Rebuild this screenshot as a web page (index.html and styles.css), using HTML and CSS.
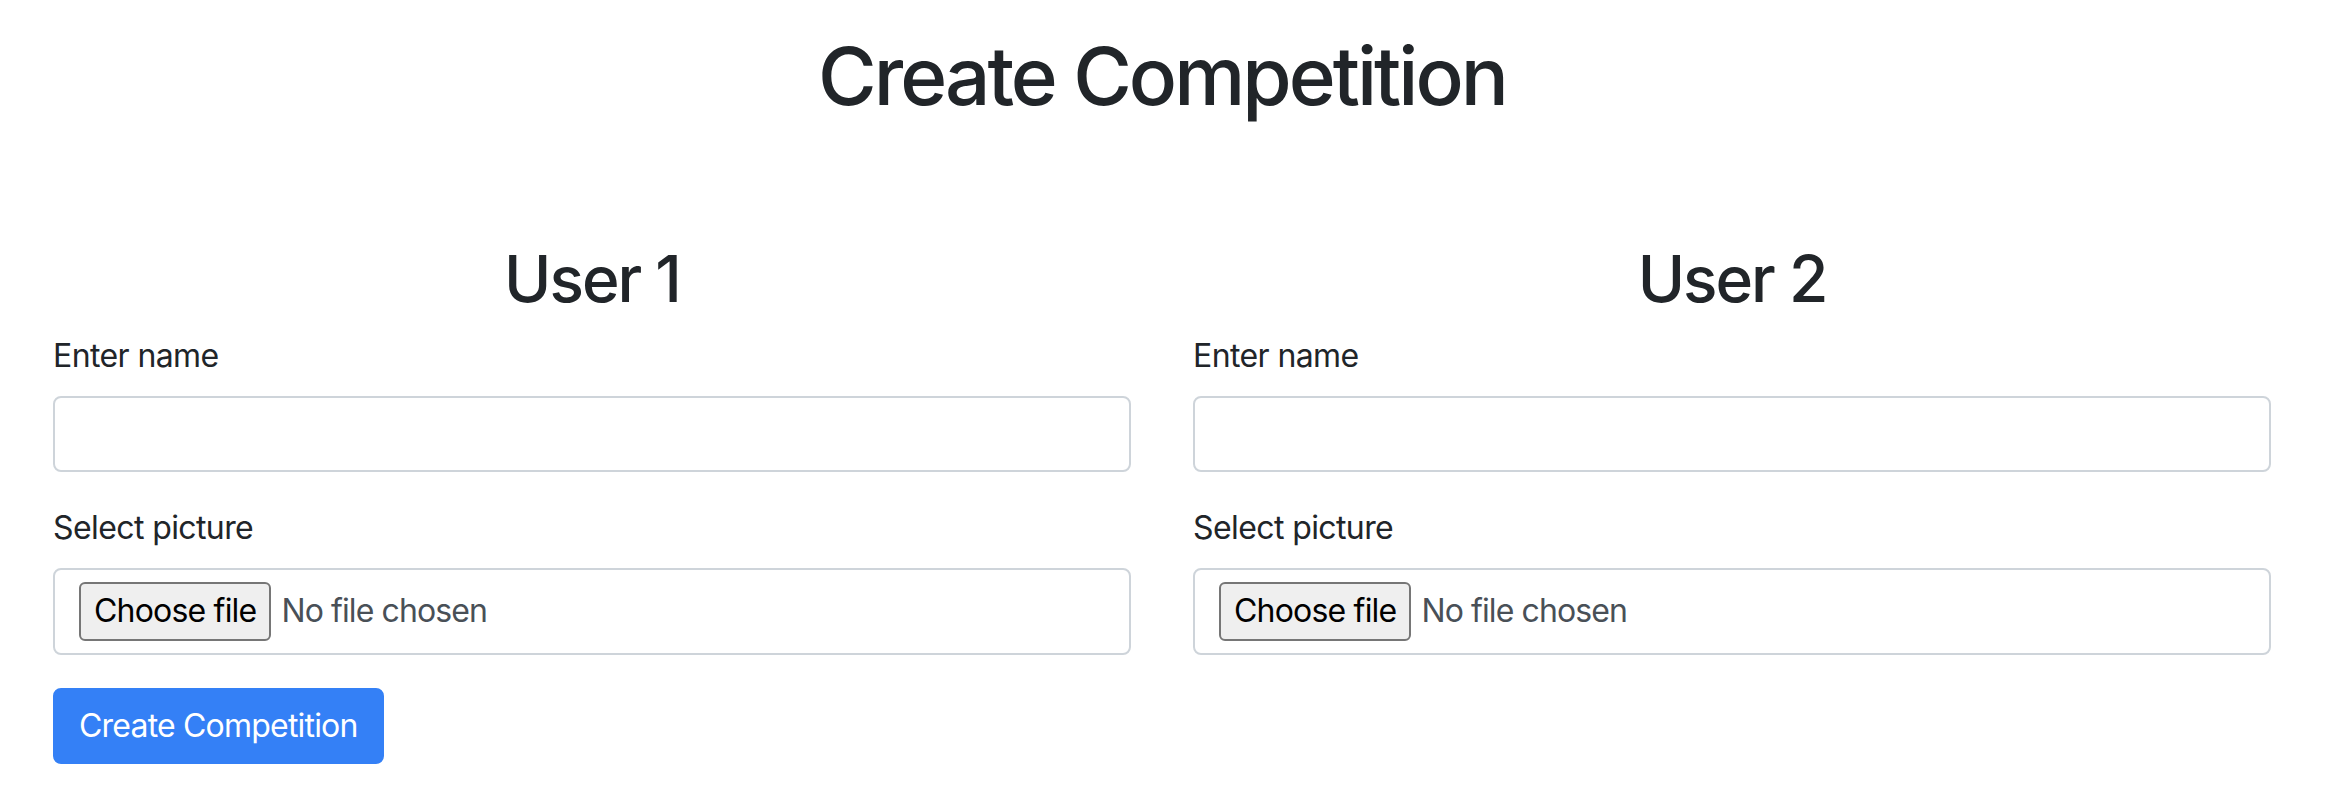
FILE: index.html
```html
<!DOCTYPE html>
<html lang="en">
<head>
<meta charset="utf-8">
<title>Create Competition</title>
<link rel="stylesheet" href="styles.css">
</head>
<body>
  <h1 class="page-title">Create Competition</h1>
  <form class="comp-form">
    <div class="users">
      <section class="user-col">
        <h2 class="user-title">User 1</h2>
        <div class="form-group">
          <label class="form-label" for="name1">Enter name</label>
          <input class="text-input" type="text" id="name1">
        </div>
        <div class="form-group">
          <span class="form-label">Select picture</span>
          <label class="file-box" for="pic1">
            <span class="file-btn">Choose file</span>
            <span class="file-status">No file chosen</span>
            <input class="file-hidden" type="file" id="pic1">
          </label>
        </div>
      </section>
      <section class="user-col">
        <h2 class="user-title">User 2</h2>
        <div class="form-group">
          <label class="form-label" for="name2">Enter name</label>
          <input class="text-input" type="text" id="name2">
        </div>
        <div class="form-group">
          <span class="form-label">Select picture</span>
          <label class="file-box" for="pic2">
            <span class="file-btn">Choose file</span>
            <span class="file-status">No file chosen</span>
            <input class="file-hidden" type="file" id="pic2">
          </label>
        </div>
      </section>
    </div>
    <div class="actions">
      <button class="submit-btn" type="button">Create Competition</button>
    </div>
  </form>
</body>
</html>
```

FILE: styles.css
```css
* {
  box-sizing: border-box;
}

html, body {
  margin: 0;
  padding: 0;
  background: #ffffff;
}

body {
  font-family: Inter, "Noto Sans", "Liberation Sans", sans-serif;
  font-size: 32px;
  line-height: 1.5;
  color: #212529;
}

.page-title {
  margin: 28px 0 0;
  padding-right: 16px;
  font-size: 80px;
  font-weight: 500;
  line-height: 1.2;
  text-align: center;
  letter-spacing: -3px;
}

.comp-form {
  padding: 117px 69px 0 53px;
}

.users {
  display: grid;
  grid-template-columns: 1fr 1fr;
  column-gap: 62px;
}

.user-title {
  margin: 0 0 14px;
  font-size: 64px;
  font-weight: 500;
  line-height: 1.2;
  text-align: center;
  letter-spacing: -2px;
}

.form-group {
  margin-bottom: 32px;
}

.form-label {
  display: block;
  margin-bottom: 16px;
  font-size: 32px;
  line-height: 1.5;
  color: #212529;
  letter-spacing: -0.6px;
}

.text-input {
  display: block;
  width: 100%;
  height: 76px;
  padding: 12px 24px;
  font: inherit;
  color: #495057;
  background: #fff;
  border: 2px solid #ced4da;
  border-radius: 8px;
  outline: none;
}

.file-box {
  display: flex;
  align-items: center;
  height: 87px;
  padding: 0 24px;
  border: 2px solid #ced4da;
  border-radius: 8px;
  background: #fff;
  cursor: pointer;
}

.file-btn {
  display: inline-flex;
  align-items: center;
  height: 59px;
  padding: 0 13px;
  margin-right: 10px;
  font-size: 32px;
  color: #000;
  background: #efefef;
  border: 2px solid #767676;
  border-radius: 6px;
  letter-spacing: -0.8px;
}

.file-status {
  font-size: 32px;
  color: #495057;
  letter-spacing: -0.9px;
}

.file-hidden {
  display: none;
}

.actions {
  padding-top: 1px;
}

.submit-btn {
  display: inline-block;
  height: 76px;
  padding: 12px 24px;
  font: inherit;
  font-size: 32px;
  line-height: 48px;
  color: #fff;
  background: #3480f6;
  border: 2px solid #3480f6;
  border-radius: 8px;
  letter-spacing: -0.8px;
}
```
